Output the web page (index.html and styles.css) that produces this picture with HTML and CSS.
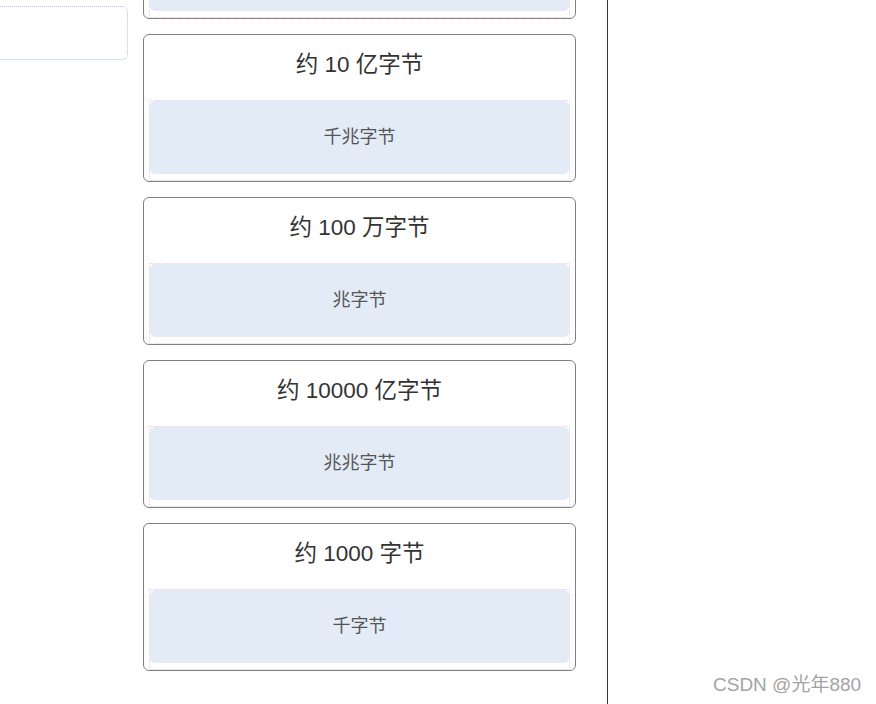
FILE: index.html
```html
<!DOCTYPE html>
<html lang="zh">
<head>
<meta charset="utf-8">
<link rel="stylesheet" href="styles.css">
</head>
<body>
<div class="page">
  <div class="left">
    <div class="lbox"></div>
    <div class="lbox"></div>
  </div>
  <div class="cards">
    <div class="card">
      <div class="title">&nbsp;</div>
      <div class="ans"><div class="fill"></div></div>
    </div>
    <div class="card">
      <div class="title">约 10 亿字节</div>
      <div class="ans"><div class="fill">千兆字节</div></div>
    </div>
    <div class="card">
      <div class="title">约 100 万字节</div>
      <div class="ans"><div class="fill">兆字节</div></div>
    </div>
    <div class="card">
      <div class="title">约 10000 亿字节</div>
      <div class="ans"><div class="fill">兆兆字节</div></div>
    </div>
    <div class="card">
      <div class="title">约 1000 字节</div>
      <div class="ans"><div class="fill">千字节</div></div>
    </div>
  </div>
  <div class="divider"></div>
</div>
<div class="watermark">CSDN @光年880</div>
</body>
</html>
```
FILE: styles.css
```css
html, body {
  margin: 0;
  padding: 0;
  background: #fff;
  overflow: hidden;
  height: 704px;
}
body {
  font-family: "Liberation Sans", "Noto Sans CJK SC", sans-serif;
  color: #333;
}
.page {
  display: flex;
  align-items: flex-start;
  height: 704px;
}
.left {
  width: 148px;
  flex: none;
  display: flex;
  flex-direction: column;
  gap: 6px;
  margin-top: -54px;
  margin-left: -20px;
}
.lbox {
  height: 52px;
  border: 1px dotted #a9c6e2;
  border-radius: 6px;
}
.cards {
  margin-left: 15px;
  width: 433px;
  flex: none;
  display: flex;
  flex-direction: column;
  gap: 15px;
  margin-top: -129px;
}
.card {
  box-sizing: border-box;
  height: 148px;
  border: 1px solid #7d8087;
  border-radius: 6px;
  padding: 0 5px;
}
.title {
  font-size: 22.5px;
  line-height: 30px;
  padding-top: 15px;
  margin-bottom: 20px;
  text-align: center;
  color: #333;
}
.ans {
  border: 1px dotted #f0c8f0;
  padding-bottom: 6px;
}
.fill {
  box-sizing: border-box;
  height: 73px;
  padding-bottom: 5px;
  background: #e3ebf7;
  border-radius: 5px;
  display: flex;
  align-items: center;
  justify-content: center;
  font-size: 18px;
  color: #555;
}
.divider {
  margin-left: 31px;
  width: 1px;
  height: 704px;
  background: #4e1f6e;
  flex: none;
}
.watermark {
  position: absolute;
  left: 713px;
  top: 672px;
  font-size: 19px;
  line-height: 26px;
  color: #a3a3a3;
  text-shadow: 0 0 1px #fff;
}
```
